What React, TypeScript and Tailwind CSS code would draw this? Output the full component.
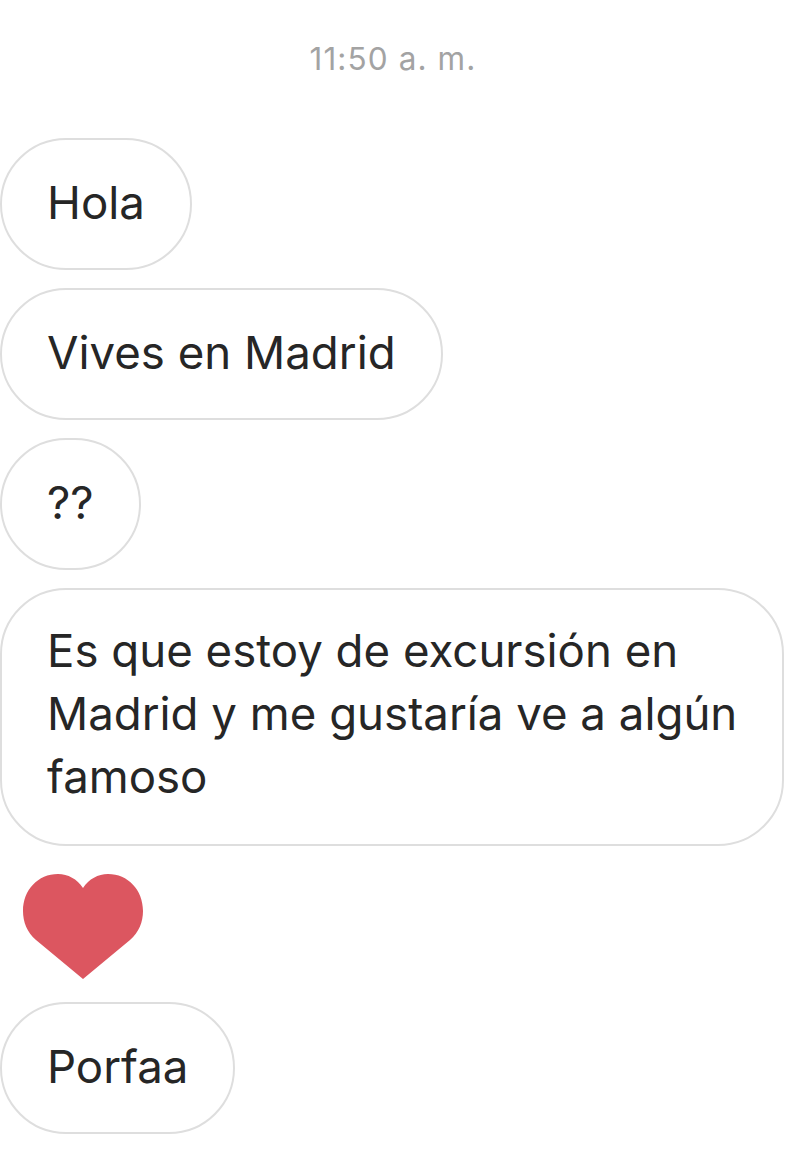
import type { ReactNode } from "react";

function Bubble({ children, className = "" }: { children: ReactNode; className?: string }) {
  return (
    <div
      className={`w-fit border-[2.5px] border-[#dedede] bg-white px-[45px] text-[45.6px] leading-[63px] text-[#262626] ${className}`}
    >
      {children}
    </div>
  );
}

export default function App() {
  return (
    <div className="flex h-[1157px] w-[810px] flex-col overflow-hidden bg-white font-['Inter','Liberation_Sans',sans-serif]">
      <div className="pt-[40px] pr-[24px] text-center text-[31.5px] leading-[38px] tracking-[1.1px] text-[#a3a3a3]">11:50 a. m.</div>
      <div className="mt-[60px] flex flex-col items-start">
        <Bubble className="flex h-[132px] items-center rounded-[66px] pb-[4px]">Hola</Bubble>
        <Bubble className="mt-[18px] flex h-[132px] items-center rounded-[66px] pb-[4px]">Vives en Madrid</Bubble>
        <Bubble className="mt-[18px] flex h-[132px] items-center rounded-[66px] pb-[4px]">??</Bubble>
        <Bubble className="mt-[18px] h-[258px] w-[800px] rounded-[66px] pt-[29px]">
          Es que estoy de excursión en<br />Madrid y me gustaría ve a algún<br />famoso
        </Bubble>
        <svg className="mt-[28px] ml-[23px]" width="120" height="105" viewBox="0 0 120 105">
          <path d="M60 105 L13 66 C4 58 0 48 0 37 C0 16 15 0 35 0 C45 0 54 5 60 14 C66 5 75 0 85 0 C105 0 120 16 120 37 C120 48 116 58 107 66 Z" fill="#dc5660" />
        </svg>
        <Bubble className="mt-[23px] flex h-[132px] items-center rounded-[66px] pb-[4px]">Porfaa</Bubble>
      </div>
    </div>
  );
}
